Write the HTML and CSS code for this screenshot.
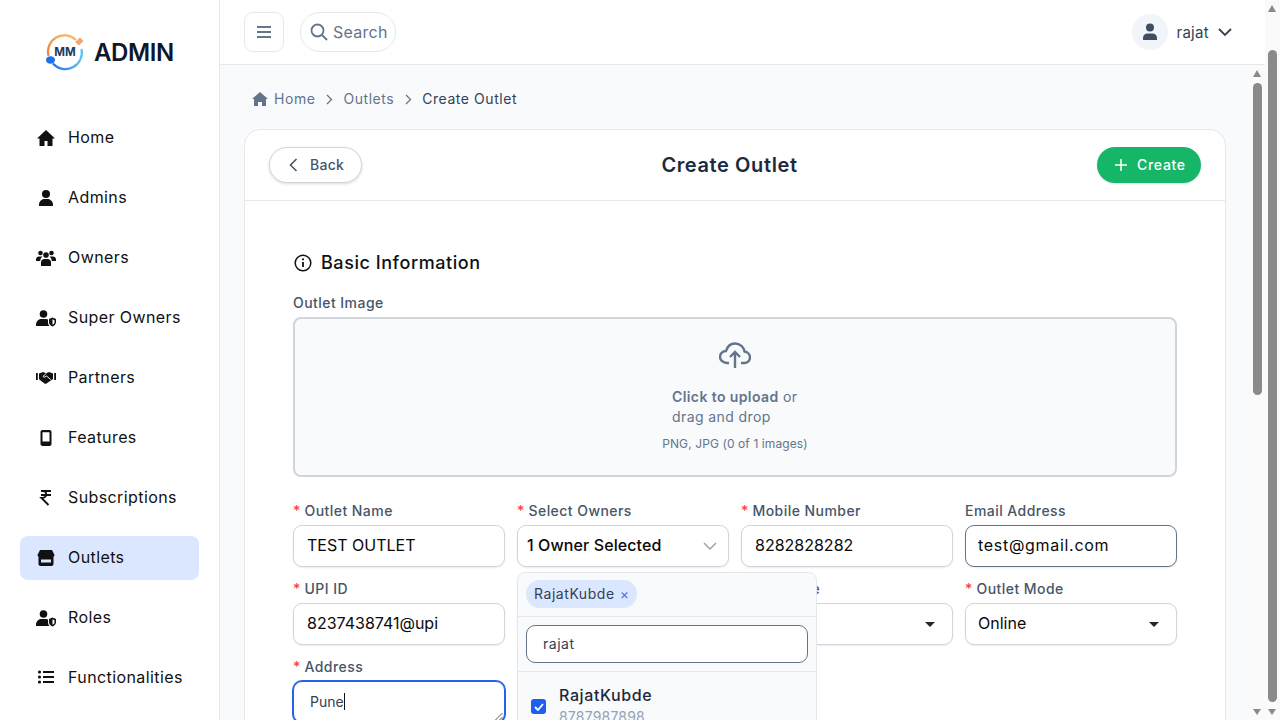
FILE: index.html

```html
<!DOCTYPE html>
<html lang="en">
<head>
  <meta charset="UTF-8">
  <title>Create Outlet</title>
  <link rel="stylesheet" href="styles.css">
</head>
<body>
  <div class="page">
    <aside class="sidebar">
      <div class="logo">
        <svg width="42" height="40" viewBox="0 0 42 40">
          <defs>
            <linearGradient id="arcTop" x1="0" y1="1" x2="1" y2="0">
              <stop offset="0" stop-color="#f0813a"/>
              <stop offset="1" stop-color="#fbbf6a"/>
            </linearGradient>
            <linearGradient id="arcBottom" x1="0" y1="0" x2="1" y2="0">
              <stop offset="0" stop-color="#1d6ff2"/>
              <stop offset="1" stop-color="#5cc3f5"/>
            </linearGradient>
          </defs>
          <path d="M4.500 24 A16.500 16.500 0 0 1 32 8" fill="none" stroke="url(#arcTop)" stroke-width="2.200"/>
          <path d="M31 10 L36 5.500 L39.500 9 L35 13.500 Z" fill="#f5a673"/>
          <path d="M37.500 17 A16.500 16.500 0 0 1 9 31.500" fill="none" stroke="url(#arcBottom)" stroke-width="2.200"/>
          <ellipse cx="6.500" cy="28" rx="4.500" ry="3.800" fill="#1d6ff2"/>
          <text x="21" y="24" class="logo-mm">MM</text>
        </svg>
        <span class="logo-text">ADMIN</span>
      </div>
      <nav class="nav">
        <a class="nav-item">
          <svg width="20" height="20" viewBox="0 0 20 20"><path d="M10 3 1 11.500h2.500V19h5v-5h3v5h5v-7.500H19z"/></svg>
          Home
        </a>
        <a class="nav-item">
          <svg width="20" height="20" viewBox="0 0 20 20"><circle cx="10" cy="7" r="4"/><path d="M3 19v-1.500C3 14.500 5.500 12 8.500 12h3c3 0 5.500 2.500 5.500 5.500V19z"/></svg>
          Admins
        </a>
        <a class="nav-item">
          <svg width="20" height="20" viewBox="0 0 20 20"><circle cx="4.500" cy="6" r="2.300"/><circle cx="15.500" cy="6" r="2.300"/><circle cx="10" cy="8" r="2.800"/><path d="M0 14v-1.500C0 10.500 1.500 9.500 3 9.500h2.300c.5 0 .8.1 1.100.3C5 10.800 4.300 12.300 4.200 14zM20 14v-1.500c0-2-1.500-3-3-3h-2.300c-.5 0-.8.1-1.100.3 1.400 1 2.100 2.500 2.200 4.200z"/><path d="M5 19v-3.500c0-2 1.500-3.500 3.500-3.500h3c2 0 3.500 1.500 3.500 3.500V19z"/></svg>
          Owners
        </a>
        <a class="nav-item">
          <svg width="20" height="20" viewBox="0 0 20 20"><circle cx="7.500" cy="7" r="3.800"/><path d="M0 19v-1.500C0 14.500 2.500 12 5 12h5c.8 0 1.500.2 2 .5V15c0 1.600.5 3 1.500 4z"/><path d="M16.500 10.500 13 12v3c0 2.200 1.400 3.600 3.500 4.500 2.100-.9 3.500-2.300 3.500-4.500v-3z"/><path d="M16.500 12.300 18.500 13.200v1.800c0 1.300-.8 2.200-2 2.800z" fill="#fff"/></svg>
          Super Owners
        </a>
        <a class="nav-item">
          <svg width="20" height="20" viewBox="0 0 20 20"><path d="M0 6h1.800v7H0zM18.200 6H20v7h-1.800z"/><path d="M3 6.500 7 5l3 1.200L13 5l4 1.500v5.500l-1.500 1-5 3.500c-.7.400-1.300.4-2 0l-4-3L3 12z"/><path d="M10 6.500 7.500 9c-.5.700 0 1.500 1 1.200L10.500 9l4.200 3.500" fill="none" stroke="#fff" stroke-width="1"/></svg>
          Partners
        </a>
        <a class="nav-item">
          <svg width="20" height="20" viewBox="0 0 20 20"><path d="M6.500 3h7c1.100 0 2 .9 2 2v12c0 1.100-.9 2-2 2h-7c-1.100 0-2-.9-2-2V5c0-1.100.9-2 2-2zm0 2.200v9.300h7V5.200z" fill-rule="evenodd"/></svg>
          Features
        </a>
        <a class="nav-item">
          <svg width="20" height="20" viewBox="0 0 20 20"><path d="M5 4h10M5 8h10M7 4c4.500 0 4.500 7-1.500 7L12.500 18" fill="none" stroke="#111" stroke-width="1.900"/></svg>
          Subscriptions
        </a>
        <a class="nav-item active">
          <svg width="20" height="20" viewBox="0 0 20 20"><path d="M4 3h12l2.500 5c0 1.200-1 2-2 2h-13c-1 0-2-.8-2-2z"/><path d="M2.500 9.500h15V17c0 1.100-.9 2-2 2h-11c-1.100 0-2-.9-2-2zm2.500 3v3h10v-3z" fill-rule="evenodd"/></svg>
          Outlets
        </a>
        <a class="nav-item">
          <svg width="20" height="20" viewBox="0 0 20 20"><circle cx="7.500" cy="7" r="3.800"/><path d="M0 19v-1.500C0 14.500 2.500 12 5 12h5c.8 0 1.500.2 2 .5V15c0 1.600.5 3 1.500 4z"/><path d="M16.500 10.500 13 12v3c0 2.200 1.400 3.600 3.500 4.500 2.100-.9 3.500-2.300 3.500-4.500v-3z"/><path d="M16.500 12.300 18.500 13.200v1.800c0 1.300-.8 2.200-2 2.800z" fill="#fff"/></svg>
          Roles
        </a>
        <a class="nav-item">
          <svg width="20" height="20" viewBox="0 0 20 20"><circle cx="3.500" cy="5" r="1.600"/><circle cx="3.500" cy="10" r="1.600"/><circle cx="3.500" cy="15" r="1.600"/><path d="M7 4h11v2H7zM7 9h11v2H7zM7 14h11v2H7z"/></svg>
          Functionalities
        </a>
      </nav>
    </aside>

    <div class="content">
      <header class="topbar">
        <button class="menu-btn">
          <svg width="16" height="14" viewBox="0 0 16 14"><path d="M1 2h14M1 7h14M1 12h14" fill="none" stroke="#64748b" stroke-width="1.800"/></svg>
        </button>
        <div class="search">
          <svg width="18" height="18" viewBox="0 0 18 18"><circle cx="7.500" cy="7.500" r="6" fill="none" stroke="#64748b" stroke-width="1.800"/><path d="m12 12 5 5" stroke="#64748b" stroke-width="1.800"/></svg>
          Search
        </div>
        <div class="user">
          <span class="avatar">
            <svg width="16" height="18" viewBox="0 0 16 18"><circle cx="8" cy="4.500" r="4"/><path d="M1 17v-2c0-2.800 2-4.500 4.500-4.500h5c2.500 0 4.500 1.700 4.500 4.500v2z"/></svg>
          </span>
          <span class="user-name">rajat</span>
          <svg width="14" height="9" viewBox="0 0 14 9"><path d="m1 1 6 6 6-6" fill="none" stroke="#374151" stroke-width="1.800"/></svg>
        </div>
      </header>

      <div class="workspace">
        <main class="main">
          <div class="breadcrumb">
            <svg width="16" height="14" viewBox="0 0 16 14"><path d="M8 0 0 7h2v7h4v-4h4v4h4V7h2z" fill="#64748b"/></svg>
            <span>Home</span>
            <svg class="crumb-sep" width="7" height="11" viewBox="0 0 7 11"><path d="m1 1 4.500 4.500L1 10" fill="none" stroke="#64748b" stroke-width="1.300"/></svg>
            <span>Outlets</span>
            <svg class="crumb-sep" width="7" height="11" viewBox="0 0 7 11"><path d="m1 1 4.500 4.500L1 10" fill="none" stroke="#64748b" stroke-width="1.300"/></svg>
            <span class="crumb-current">Create Outlet</span>
          </div>

          <section class="card">
            <div class="card-head">
              <button class="btn-back">
                <svg width="9" height="14" viewBox="0 0 9 14"><path d="M7.500 1 1.500 7l6 6" fill="none" stroke="#475569" stroke-width="1.600"/></svg>
                Back
              </button>
              <h1 class="card-title">Create Outlet</h1>
              <button class="btn-create">
                <svg width="12" height="12" viewBox="0 0 12 12"><path d="M6 0v12M0 6h12" stroke="#fff" stroke-width="1.500"/></svg>
                Create
              </button>
            </div>

            <div class="card-body">
              <h2 class="section-title">
                <svg width="18" height="18" viewBox="0 0 18 18"><circle cx="9" cy="9" r="7.800" fill="none" stroke="#111" stroke-width="1.500"/><path d="M9 8v5" stroke="#111" stroke-width="1.800"/><circle cx="9" cy="5.300" r="1.100" fill="#111"/></svg>
                Basic Information
              </h2>

              <label class="label">Outlet Image</label>
              <div class="upload">
                <svg width="32" height="26" viewBox="0 0 32 26"><path d="M10 21H8c-4.500 0-7-3.500-7-6 0-3.500 3-6 6-6 1.500-5 5-7.500 9-7.500 5 0 9 3.500 9.500 8 3 .5 5.500 3 5.500 6 0 3-2.500 5.500-5.500 5.500H22" fill="none" stroke="#64748b" stroke-width="2.400"/><path d="M16 26V10M11 15l5-5 5 5" fill="none" stroke="#64748b" stroke-width="2.400"/></svg>
                <p class="upload-text"><strong>Click to upload</strong> or<br>drag and drop</p>
                <p class="upload-hint">PNG, JPG (0 of 1 images)</p>
              </div>

              <div class="form-grid">
                <div class="field">
                  <label class="label"><em>*</em> Outlet Name</label>
                  <div class="box">TEST OUTLET</div>
                </div>
                <div class="field owners">
                  <label class="label"><em>*</em> Select Owners</label>
                  <div class="box box-select">
                    <span>1 Owner Selected</span>
                    <svg width="14" height="8" viewBox="0 0 14 8"><path d="m1 1 6 6 6-6" fill="none" stroke="#9ca3af" stroke-width="1.500"/></svg>
                  </div>
                  <div class="dropdown">
                    <div class="drop-chips">
                      <span class="chip">RajatKubde <b>×</b></span>
                    </div>
                    <div class="drop-search">
                      <div class="drop-input">rajat</div>
                    </div>
                    <div class="drop-item">
                      <span class="check">
                        <svg width="10" height="8" viewBox="0 0 10 8"><path d="m1 4 3 3 5-6" fill="none" stroke="#fff" stroke-width="1.800"/></svg>
                      </span>
                      <div>
                        <div class="drop-name">RajatKubde</div>
                        <div class="drop-phone">8787987898</div>
                      </div>
                    </div>
                  </div>
                </div>
                <div class="field">
                  <label class="label"><em>*</em> Mobile Number</label>
                  <div class="box">8282828282</div>
                </div>
                <div class="field">
                  <label class="label">Email Address</label>
                  <div class="box box-dark">test@gmail.com</div>
                </div>

                <div class="field">
                  <label class="label"><em>*</em> UPI ID</label>
                  <div class="box">8237438741@upi</div>
                </div>
                <div class="field">
                  <label class="label">&nbsp;</label>
                  <div class="box"></div>
                </div>
                <div class="field">
                  <label class="label"><em>*</em> Mess Fee</label>
                  <div class="box box-select"><span></span><i class="caret"></i></div>
                </div>
                <div class="field">
                  <label class="label"><em>*</em> Outlet Mode</label>
                  <div class="box box-select"><span>Online</span><i class="caret"></i></div>
                </div>

                <div class="field">
                  <label class="label"><em>*</em> Address</label>
                  <div class="box box-area">
                    Pune<i class="text-cursor"></i>
                    <svg class="resize-grip" width="9" height="9" viewBox="0 0 9 9"><path d="M8.500 1 1 8.500M8.500 5 5 8.500" stroke="#555" stroke-width="1"/></svg>
                  </div>
                </div>
              </div>
            </div>
          </section>
        </main>
        <div class="scrollbar">
          <i class="arrow-up"></i>
          <div class="thumb inner-thumb"></div>
          <i class="arrow-down"></i>
        </div>
      </div>
    </div>

    <div class="scrollbar">
      <i class="arrow-up"></i>
      <div class="thumb page-thumb"></div>
      <i class="arrow-down"></i>
    </div>
  </div>
</body>
</html>
```

FILE: styles.css

```css
* {
  box-sizing: border-box;
}
html, body {
  margin: 0;
  height: 720px;
  overflow: hidden;
}
body {
  font-family: Inter, "Liberation Sans", sans-serif;
  color: #111;
  background: #fff;
}
button {
  font-family: inherit;
  cursor: pointer;
}
.page {
  display: flex;
  height: 720px;
}

/* sidebar */
.sidebar {
  width: 220px;
  flex-shrink: 0;
  background: #fff;
  border-right: 1px solid #e5e7eb;
  padding: 0 20px;
}
.logo {
  height: 104px;
  display: flex;
  align-items: center;
  gap: 8px;
  padding-left: 24px;
}
.logo-mm {
  font-size: 11.500px;
  font-weight: 700;
  fill: #1e3a5f;
  text-anchor: middle;
}
.logo-text {
  font-size: 24px;
  font-weight: 600;
  letter-spacing: -0.4px;
  color: #0f172a;
}
.nav {
  padding-top: 12px;
  display: flex;
  flex-direction: column;
  gap: 16px;
}
.nav-item {
  height: 44px;
  display: flex;
  align-items: center;
  gap: 12px;
  padding: 0 0 2px 16px;
  border-radius: 8px;
  font-size: 16px;
  letter-spacing: 0.4px;
  color: #111;
}
.nav-item svg {
  flex-shrink: 0;
  fill: #111;
}
.nav-item.active {
  background: #dbe7fe;
}

/* top bar */
.content {
  flex: 1;
  min-width: 0;
  display: flex;
  flex-direction: column;
}
.topbar {
  height: 65px;
  flex-shrink: 0;
  display: flex;
  align-items: center;
  padding: 0 33px 0 24px;
  border-bottom: 1px solid #e5e7eb;
}
.menu-btn {
  width: 40px;
  height: 40px;
  background: #fff;
  border: 1px solid #e5e7eb;
  border-radius: 9px;
  display: flex;
  align-items: center;
  justify-content: center;
  padding: 0;
}
.search {
  margin-left: 16px;
  width: 96px;
  height: 40px;
  border: 1px solid #e5e7eb;
  border-radius: 20px;
  display: flex;
  align-items: center;
  gap: 5px;
  padding-left: 9px;
  font-size: 16px;
  letter-spacing: 0.25px;
  color: #64748b;
  white-space: nowrap;
}
.user {
  margin-left: auto;
  display: flex;
  align-items: center;
}
.avatar {
  width: 36px;
  height: 36px;
  border-radius: 50%;
  background: #f1f5f9;
  display: flex;
  align-items: center;
  justify-content: center;
  margin-right: 8px;
}
.avatar svg {
  fill: #3f4d63;
}
.user-name {
  font-size: 15px;
  letter-spacing: 0.3px;
  color: #334155;
  margin: 0 9px 0 0;
}

/* main area */
.workspace {
  flex: 1;
  min-height: 0;
  display: flex;
}
.main {
  flex: 1;
  min-width: 0;
  background: #f8fafc;
  padding: 24px 24px 0;
  overflow: hidden;
}
.breadcrumb {
  height: 20px;
  margin-bottom: 20px;
  padding-left: 8px;
  display: flex;
  align-items: center;
  gap: 6px;
  font-size: 14px;
  letter-spacing: 0.55px;
  color: #64748b;
}
.breadcrumb span {
  margin-bottom: 2px;
}
.crumb-sep {
  margin: 0 4.500px;
}
.crumb-current {
  color: #334155;
}
.card {
  background: #fff;
  border: 1px solid #e5e7eb;
  border-radius: 16px;
  height: 700px;
}
.card-head {
  height: 71px;
  padding: 0 24px;
  border-bottom: 1px solid #e5e7eb;
  display: flex;
  align-items: center;
  justify-content: space-between;
}
.card-title {
  margin: 0;
  font-size: 20px;
  font-weight: 600;
  letter-spacing: 0.6px;
  color: #1e293b;
}
.btn-back {
  width: 93px;
  height: 36px;
  background: #fff;
  border: 1px solid #d1d5db;
  border-radius: 18px;
  box-shadow: 0 1px 3px rgba(0, 0, 0, 0.15);
  display: flex;
  align-items: center;
  gap: 12px;
  padding: 0 0 2px 19px;
  font-size: 14px;
  font-weight: 500;
  letter-spacing: 0.3px;
  color: #475569;
}
.btn-create {
  width: 104px;
  height: 36px;
  border: 0;
  border-radius: 18px;
  background: #16b669;
  box-shadow: 0 1px 2px rgba(0, 0, 0, 0.12);
  display: flex;
  align-items: center;
  gap: 10px;
  padding: 0 0 2px 18px;
  font-size: 14px;
  font-weight: 500;
  letter-spacing: 0.7px;
  color: #fff;
}
.btn-back svg, .btn-create svg {
  margin-top: 2px;
}
.card-body {
  padding: 48px 48px 0;
}
.section-title {
  margin: 0 0 16px;
  height: 28px;
  display: flex;
  align-items: center;
  gap: 9px;
  padding: 0 0 1px 1px;
  font-size: 18px;
  font-weight: 500;
  letter-spacing: 0.55px;
  color: #111;
}
.label {
  display: block;
  height: 20px;
  line-height: 20px;
  margin-bottom: 4px;
  font-size: 14px;
  font-weight: 500;
  letter-spacing: 0.45px;
  color: #475569;
  white-space: nowrap;
}
.label em {
  font-style: normal;
  letter-spacing: 0;
  color: #ef4444;
}
.upload {
  height: 160px;
  background: #f8fafc;
  border: 2px solid #d1d5db;
  border-radius: 8px;
  display: flex;
  flex-direction: column;
  align-items: center;
  padding-top: 23px;
  color: #64748b;
}
.upload-text {
  width: 126px;
  margin: 19px 0 0;
  font-size: 14px;
  line-height: 20px;
  letter-spacing: 0.4px;
  white-space: nowrap;
}
.upload-text strong {
  font-weight: 600;
}
.upload-hint {
  margin: 9px 0 0;
  font-size: 12px;
  line-height: 16px;
  letter-spacing: 0.1px;
}

/* form */
.form-grid {
  margin-top: 24px;
  display: grid;
  grid-template-columns: repeat(4, 212px);
  gap: 12px;
}
.field {
  position: relative;
  min-width: 0;
}
.box {
  height: 42px;
  background: #fff;
  border: 1px solid #d1d5db;
  border-radius: 9px;
  box-shadow: 0 1px 2px rgba(0, 0, 0, 0.08);
  display: flex;
  align-items: center;
  padding: 0 13px 2px;
  font-size: 16px;
  color: #0a0a0a;
  white-space: nowrap;
}
.box-dark {
  border-color: #64748b;
  padding-left: 12px;
  letter-spacing: 0.7px;
}
.box-select {
  justify-content: space-between;
  padding-right: 17px;
  padding-left: 12px;
}
.box-select svg, .caret {
  margin-top: 2px;
}
.owners .box-select {
  padding: 0 11px 2px 9px;
  font-weight: 500;
  letter-spacing: 0.1px;
}
.caret {
  width: 0;
  height: 0;
  border-left: 5px solid transparent;
  border-right: 5px solid transparent;
  border-top: 5px solid #1f2937;
}
.box-area {
  position: relative;
  align-items: flex-start;
  padding: 11px 16px;
  font-size: 14px;
  line-height: 18px;
  color: #334155;
  border: 1px solid #2563eb;
  box-shadow: 0 0 0 1px #2563eb;
}
.text-cursor {
  width: 1px;
  height: 17px;
  background: #111;
}
.resize-grip {
  position: absolute;
  right: 1px;
  bottom: 1px;
}

/* owners dropdown */
.dropdown {
  position: absolute;
  left: 0;
  top: 71px;
  width: 300px;
  height: 260px;
  background: #f8fafc;
  border: 1px solid #e5e7eb;
  border-radius: 8px;
  z-index: 5;
}
.drop-chips {
  height: 44px;
  padding: 7px 8px;
  border-bottom: 1px solid #e5e7eb;
}
.chip {
  display: inline-flex;
  align-items: center;
  gap: 5px;
  height: 28px;
  padding: 0 8px 2px;
  border-radius: 14px;
  background: #dbe7fe;
  font-size: 14px;
  letter-spacing: 0.55px;
  color: #334155;
  white-space: nowrap;
}
.chip b {
  font-weight: 400;
  color: #4f6bed;
}
.drop-search {
  padding: 8px;
  border-bottom: 1px solid #e5e7eb;
}
.drop-input {
  height: 38px;
  background: #fff;
  border: 1px solid #64748b;
  border-radius: 9px;
  display: flex;
  align-items: center;
  padding: 0 0 2px 16px;
  font-size: 14px;
  letter-spacing: 0.5px;
  color: #334155;
}
.drop-item {
  display: flex;
  align-items: flex-start;
  gap: 13px;
  padding: 12px 13px;
}
.check {
  width: 15px;
  height: 15px;
  margin-top: 15px;
  border-radius: 3px;
  background: #1d5fef;
  display: flex;
  align-items: center;
  justify-content: center;
  flex-shrink: 0;
}
.drop-name {
  font-size: 16px;
  line-height: 22px;
  font-weight: 500;
  letter-spacing: 0.6px;
  color: #1e293b;
}
.drop-phone {
  font-size: 14px;
  line-height: 21px;
  letter-spacing: 0.2px;
  color: #94a3b8;
}

/* fake scrollbars, the real ones don't show in this browser */
.scrollbar {
  width: 15px;
  flex-shrink: 0;
  background: #fafafa;
  position: relative;
}
.thumb {
  position: absolute;
  left: 3px;
  width: 9px;
  background: #8a8a8a;
  border-radius: 5px;
}
.inner-thumb {
  top: 18px;
  height: 312px;
}
.page-thumb {
  top: 50px;
  height: 652px;
}
.arrow-up, .arrow-down {
  position: absolute;
  left: 3px;
  width: 0;
  height: 0;
  border-left: 4.500px solid transparent;
  border-right: 4.500px solid transparent;
}
.arrow-up {
  top: 5px;
  border-bottom: 7px solid #8a8a8a;
}
.arrow-down {
  bottom: 5px;
  border-top: 6px solid #8a8a8a;
}
```
